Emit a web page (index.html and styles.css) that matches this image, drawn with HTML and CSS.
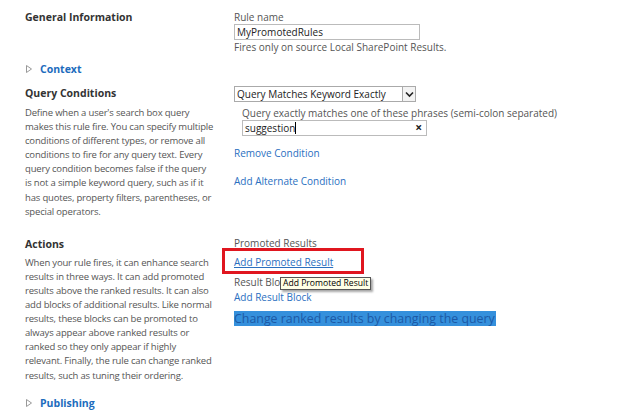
FILE: index.html
```html
<!DOCTYPE html>
<html>
<head>
<meta charset="utf-8">
<link rel="stylesheet" href="styles.css">
</head>
<body>
<div class="page">
  <div class="section sec-general">
    <div class="left"><div class="heading">General Information</div></div>
    <div class="right">
      <div class="label">Rule name</div>
      <div class="textbox tb-name">MyPromotedRules</div>
      <div class="label">Fires only on source Local SharePoint Results.</div>
    </div>
  </div>

  <div class="collapsible c-context"><svg class="tri" width="6" height="8" viewBox="0 0 6 8"><path d="M0.5 0.5 L5.5 4 L0.5 7.5 Z" fill="#fff" stroke="#999" stroke-width="1"/></svg><span class="ctitle">Context</span></div>

  <div class="section sec-query">
    <div class="left">
      <div class="heading">Query Conditions</div>
      <p class="desc"><span>Define when a user's search box query</span><span>makes this rule fire. You can specify multiple</span><span>conditions of different types, or remove all</span><span>conditions to fire for any query text. Every</span><span>query condition becomes false if the query</span><span>is not a simple keyword query, such as if it</span><span>has quotes, property filters, parentheses, or</span><span>special operators.</span></p>
    </div>
    <div class="right">
      <div class="select"><span class="sel-text">Query Matches Keyword Exactly</span><span class="sel-btn"><svg width="9" height="7" viewBox="0 0 9 7"><path d="M1 1.5 L4.5 5 L8 1.5" fill="none" stroke="#222" stroke-width="1.6"/></svg></span></div>
      <div class="indent">
        <div class="label">Query exactly matches one of these phrases (semi-colon separated)</div>
        <div class="textbox tb-query"><span>suggestion<span class="caret"></span></span><span class="clear">×</span></div>
      </div>
      <a class="link l-remove">Remove Condition</a>
      <a class="link l-alt">Add Alternate Condition</a>
    </div>
  </div>

  <div class="section sec-actions">
    <div class="left">
      <div class="heading">Actions</div>
      <p class="desc"><span>When your rule fires, it can enhance search</span><span>results in three ways. It can add promoted</span><span>results above the ranked results. It can also</span><span>add blocks of additional results. Like normal</span><span>results, these blocks can be promoted to</span><span>always appear above ranked results or</span><span>ranked so they only appear if highly</span><span>relevant. Finally, the rule can change ranked</span><span>results, such as tuning their ordering.</span></p>
    </div>
    <div class="right actions-right">
      <div class="label">Promoted Results</div>
      <a class="link under l-promo">Add Promoted Result</a>
      <div class="label l-block">Result Block</div>
      <a class="link l-addblock">Add Result Block</a>
      <div class="highlight">Change ranked results by changing the query</div>
      <div class="redbox"></div>
      <div class="tooltip">Add Promoted Result</div>
    </div>
  </div>

  <div class="collapsible c-pub"><svg class="tri" width="6" height="8" viewBox="0 0 6 8"><path d="M0.5 0.5 L5.5 4 L0.5 7.5 Z" fill="#fff" stroke="#999" stroke-width="1"/></svg><span class="ctitle">Publishing</span></div>
</div>
</body>
</html>
```

FILE: styles.css
```css
html, body {
  margin: 0;
  padding: 0;
  background: #fff;
}
body {
  font-family: "Open Sans", "Noto Sans", sans-serif;
  font-size: 10px;
  color: #444;
  width: 624px;
  height: 415px;
  overflow: hidden;
}
.page {
  padding-left: 25px;
}
.section {
  display: grid;
  grid-template-columns: 209px 1fr;
}
.heading {
  font-weight: bold;
  font-size: 10.5px;
  color: #333;
  line-height: 14px;
}
.desc {
  margin: 6px 0 0 0;
  font-size: 9.5px;
  letter-spacing: -0.18px;
  line-height: 14.1px;
  color: #555;
}
.desc span {
  display: block;
  white-space: nowrap;
}
.label {
  line-height: 13px;
  color: #555;
}
.textbox {
  box-sizing: border-box;
  height: 16px;
  border: 1px solid #bbb;
  line-height: 14px;
  padding-left: 2px;
  color: #222;
  background: #fff;
}
.sec-general {
  padding-top: 10px;
}
.sec-general .right {
  padding-top: 1px;
}
.tb-name {
  width: 186px;
  margin: 0 0 1px 0;
}
.collapsible {
  display: flex;
  align-items: center;
  gap: 8px;
  height: 14px;
  padding-left: 1px;
}
.tri {
  display: block;
}
.ctitle {
  color: #1d6cbd;
  font-weight: bold;
  font-size: 10.5px;
}
.c-context {
  margin-top: 8px;
}
.sec-query {
  margin-top: 10px;
}
.select {
  box-sizing: border-box;
  width: 182px;
  height: 16px;
  border: 1px solid #aaa;
  display: flex;
  justify-content: space-between;
  align-items: stretch;
  color: #222;
}
.sel-text {
  padding-left: 2px;
  line-height: 14px;
}
.sel-btn {
  width: 12px;
  border-left: 1px solid #aaa;
  background: #f3f3f3;
  display: flex;
  align-items: center;
  justify-content: center;
}
.indent {
  padding-left: 8px;
  padding-top: 5px;
}
.tb-query {
  width: 185px;
  display: flex;
  justify-content: space-between;
  padding-right: 4px;
}
.caret {
  display: inline-block;
  width: 1px;
  height: 12px;
  background: #000;
  vertical-align: -2px;
}
.clear {
  font-weight: bold;
  font-size: 12px;
  line-height: 14px;
  color: #222;
}
.link {
  display: block;
  color: #2a6fbf;
  line-height: 13px;
}
.l-remove {
  margin-top: 11px;
}
.l-alt {
  margin-top: 15px;
}
.sec-actions {
  margin-top: 18px;
}
.sec-actions .desc {
  margin-top: 5px;
}
.actions-right {
  position: relative;
}
.under {
  text-decoration: underline;
}
.l-promo {
  margin-top: 6px;
}
.l-block {
  margin-top: 7px;
}
.l-addblock {
  margin-top: 2px;
}
.highlight {
  margin-top: 7px;
  width: 262px;
  height: 15px;
  background: #3590dc;
  color: #1c59a6;
  font-size: 12.4px;
  line-height: 15px;
  white-space: nowrap;
  overflow: hidden;
}
.redbox {
  position: absolute;
  left: -12px;
  top: 11px;
  width: 136px;
  height: 20px;
  border: 3px solid #e0161f;
}
.tooltip {
  position: absolute;
  left: 46px;
  top: 40px;
  height: 11px;
  padding: 0 2px;
  background: #ffffe6;
  border: 1px solid #555;
  color: #000;
  font-size: 8.6px;
  line-height: 11px;
  white-space: nowrap;
  box-shadow: 2px 2px 2px rgba(0,0,0,0.35);
}
.c-pub {
  margin-top: 13px;
}
```
